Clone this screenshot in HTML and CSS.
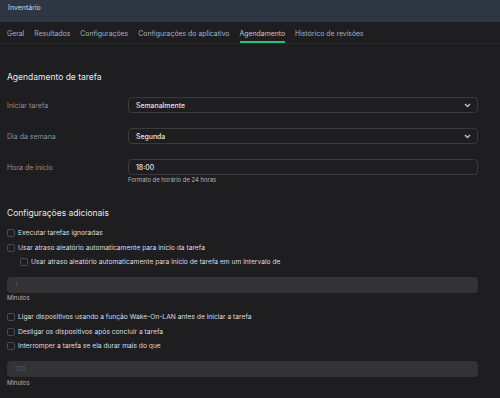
FILE: index.html
```html
<!DOCTYPE html>
<html lang="pt">
<head>
    <meta charset="UTF-8">
    <title>Inventário</title>
    <link rel="stylesheet" href="styles.css">
</head>
<body>

    <div class="topbar">Inventário</div>

    <nav class="tabs">
        <span class="tab">Geral</span>
        <span class="tab">Resultados</span>
        <span class="tab">Configurações</span>
        <span class="tab">Configurações do aplicativo</span>
        <span class="tab active">Agendamento</span>
        <span class="tab">Histórico de revisões</span>
    </nav>

    <div class="content">
        <h2 class="section-title first">Agendamento de tarefa</h2>

        <div class="form-row">
            <label>Iniciar tarefa</label>
            <div class="select">
                <span>Semanalmente</span>
                <svg width="7" height="5" viewBox="0 0 7 5"><path d="M1 1 L3.5 3.5 L6 1" fill="none" stroke="#bdbdc2" stroke-width="1.5"/></svg>
            </div>
        </div>

        <div class="form-row">
            <label>Dia da semana</label>
            <div class="select">
                <span>Segunda</span>
                <svg width="7" height="5" viewBox="0 0 7 5"><path d="M1 1 L3.5 3.5 L6 1" fill="none" stroke="#bdbdc2" stroke-width="1.5"/></svg>
            </div>
        </div>

        <div class="form-row">
            <label>Hora de início</label>
            <div class="select">
                <span>18:00</span>
            </div>
        </div>
        <div class="hint">Formato de horário de 24 horas</div>

        <h2 class="section-title second">Configurações adicionais</h2>

        <div class="check first"><span class="box"></span>Executar tarefas ignoradas</div>
        <div class="check"><span class="box"></span>Usar atraso aleatório automaticamente para início da tarefa</div>
        <div class="check nested"><span class="box"></span>Usar atraso aleatório automaticamente para início de tarefa em um intervalo de</div>

        <div class="field-disabled">1</div>
        <div class="unit">Minutos</div>

        <div class="check first after-unit"><span class="box"></span>Ligar dispositivos usando a função Wake-On-LAN antes de iniciar a tarefa</div>
        <div class="check"><span class="box"></span>Desligar os dispositivos após concluir a tarefa</div>
        <div class="check"><span class="box"></span>Interromper a tarefa se ela durar mais do que</div>

        <div class="field-disabled">120</div>
        <div class="unit last">Minutos</div>
    </div>

</body>
</html>
```

FILE: styles.css
```css
body {
    margin: 0;
    background: #1e1e20;
    font-family: Inter, "Noto Sans", sans-serif;
    color: #d8d8dc;
}

.topbar {
    height: 22px;
    box-sizing: border-box;
    padding: 3px 8px 0;
    background: #2e3644;
    color: #d4d8de;
    font-size: 7px;
    line-height: 9px;
}

.tabs {
    display: flex;
    gap: 10px;
    height: 21px;
    padding: 0 7px;
    border-bottom: 1px solid #29292c;
}

.tab {
    box-sizing: border-box;
    height: 21px;
    padding-top: 7px;
    font-size: 6.9px;
    line-height: 9px;
    color: #a9aeb6;
    border-bottom: 2px solid transparent;
}

.tab.active {
    color: #c4c8ce;
    border-bottom-color: #2fbf71;
}

.content {
    padding: 0 22px 0 7px;
}

.section-title {
    margin: 0;
    font-size: 8.5px;
    line-height: 12px;
    font-weight: 400;
    color: #e8e8ea;
}

.section-title.first {
    margin-top: 27px;
    margin-bottom: 14px;
}

.section-title.second {
    margin-top: 23px;
}

.form-row {
    display: grid;
    grid-template-columns: 121px 1fr;
    align-items: center;
    margin-bottom: 15px;
}

.form-row:nth-of-type(3) {
    margin-bottom: 0;
}

.form-row label {
    font-size: 7px;
    color: #8f8f95;
}

.select {
    display: flex;
    align-items: center;
    justify-content: space-between;
    height: 16px;
    box-sizing: border-box;
    padding: 0 6px 0 7px;
    border: 1px solid #3a3a3d;
    border-radius: 4px;
    font-size: 6.9px;
    font-weight: 500;
    color: #e4e4e6;
}

.hint {
    margin-left: 121px;
    margin-top: 1px;
    font-size: 5.9px;
    line-height: 8px;
    color: #b4b4b8;
}

.check {
    display: flex;
    align-items: center;
    gap: 3px;
    height: 10px;
    margin-top: 4.5px;
    font-size: 6.7px;
    color: #dcdce0;
}

.check.first {
    margin-top: 9px;
}

.check.after-unit {
    margin-top: 10px;
}

.check.nested {
    padding-left: 13px;
}

.box {
    width: 6px;
    height: 6px;
    border: 1px solid #4a4a4f;
    border-radius: 2px;
    flex-shrink: 0;
}

.field-disabled {
    height: 16px;
    margin-top: 10px;
    padding-left: 8px;
    background: #333336;
    border-radius: 4px;
    font-size: 6.5px;
    line-height: 16px;
    color: #58585d;
}

.unit {
    margin-top: 1px;
    font-size: 6px;
    line-height: 8px;
    color: #b4b4b8;
}

.unit.last {
    margin-top: 2px;
}
```
